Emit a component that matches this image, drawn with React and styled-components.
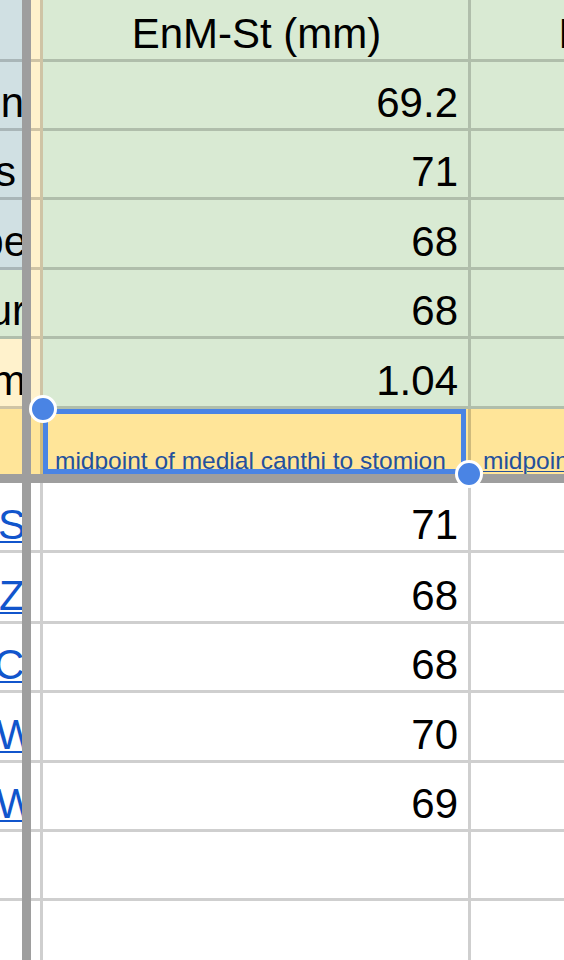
import React from 'react'
import styled, { createGlobalStyle } from 'styled-components'

const GlobalStyle = createGlobalStyle`
  html, body {
    margin: 0;
    padding: 0;
    background: #ffffff;
  }
  body {
    font-family: "Liberation Sans", Arial, sans-serif;
  }
`

const BLUE = '#d0e0e3'
const GREEN = '#d9ead3'
const PALE = '#fff2cc'
const YELLOW = '#ffe599'
const WHITE = '#ffffff'
const GRID = 'rgba(0, 0, 0, 0.19)'
const FROZEN = '#9e9e9e'
const LINK = '#1155cc'
const SELECT = '#4a84e4'

const Sheet = styled.div`
  width: 564px;
  height: 960px;
  overflow: hidden;
  background: #ffffff;
  color: #000000;
`

const Row = styled.div`
  display: flex;
  height: ${props => props.$h}px;
  box-sizing: border-box;
`

const LabelCell = styled.div`
  flex: none;
  width: 22px;
  box-sizing: border-box;
  overflow: hidden;
  display: flex;
  align-items: flex-end;
  justify-content: ${props => props.$link ? 'flex-start' : 'flex-end'};
  background: ${props => props.$bg};
  border-bottom: ${props => props.$line ? `3px solid ${GRID}` : 'none'};
  font-size: 42px;
  line-height: 48px;
  white-space: nowrap;
  padding-bottom: 1px;
`

const LabelText = styled.span`
  flex: none;
  margin-right: ${props => props.$right || 0}px;
  margin-left: ${props => props.$left || 0}px;
`

const LinkText = styled.span`
  flex: none;
  color: ${props => props.$small ? '#24509c' : LINK};
  text-decoration: underline;
  text-decoration-thickness: ${props => props.$small ? 1 : 2}px;
  text-underline-offset: 2px;
`

const FrozenColumn = styled.div`
  flex: none;
  width: 9px;
  background: ${FROZEN};
`

const FrozenRow = styled.div`
  height: 9px;
  background: ${FROZEN};
`

const Stripe = styled.div`
  flex: none;
  width: 12px;
  box-sizing: border-box;
  background: ${props => props.$bg};
  border-right: 3px solid ${GRID};
  border-bottom: ${props => props.$line ? `3px solid ${GRID}` : 'none'};
`

const Cell = styled.div`
  flex: none;
  position: relative;
  width: 428px;
  box-sizing: border-box;
  display: flex;
  align-items: flex-end;
  justify-content: ${props => props.$align === 'center' ? 'center' : props.$align === 'left' ? 'flex-start' : 'flex-end'};
  padding: 0 10px ${props => props.$small ? 0 : 1}px 12px;
  background: ${props => props.$bg};
  border-right: 3px solid ${GRID};
  border-bottom: ${props => props.$line ? `3px solid ${GRID}` : 'none'};
  font-size: ${props => props.$small ? 24.5 : 42}px;
  line-height: ${props => props.$small ? 26 : 48}px;
  white-space: nowrap;
  overflow: ${props => props.$clip ? 'hidden' : 'visible'};
`

const Selection = styled.div`
  position: absolute;
  top: 0;
  left: 0;
  right: 2px;
  bottom: 0;
  border: 5px solid ${SELECT};
  box-sizing: border-box;
  pointer-events: none;
  z-index: 10;
`

const Handle = styled.div`
  position: absolute;
  width: 22px;
  height: 22px;
  border-radius: 50%;
  background: ${SELECT};
  border: 3px solid #ffffff;
  left: ${props => props.$x - 14}px;
  top: ${props => props.$y - 14}px;
  z-index: 11;
`

const summary = [
  { h: 62, label: { bg: BLUE }, value: 'EnM-St (mm)', next: 'EnM-Pr (mm)', align: 'center' },
  { h: 69, label: { bg: BLUE, text: 'n', right: -2 }, value: '69.2' },
  { h: 69, label: { bg: BLUE, text: 's', right: 6 }, value: '71' },
  { h: 70, label: { bg: BLUE, text: 'be', right: -5 }, value: '68' },
  { h: 69, label: { bg: GREEN, text: 'ur', right: -4 }, value: '68' },
  { h: 70, label: { bg: PALE, text: 'm', right: -4 }, value: '1.04' },
]

const records = [
  { h: 70, name: 'Smith', left: -2, value: '71' },
  { h: 71, name: 'Zhao', left: -1, value: '68' },
  { h: 69, name: 'Chen', left: -6, value: '68' },
  { h: 70, name: 'Wang', left: -4, value: '70' },
  { h: 69, name: 'Wu', left: -4, value: '69' },
  { h: 69 },
  { h: 70 },
]

const App = () => {
  return (
    <Sheet>
      <GlobalStyle />
      {summary.map((row, i) => (
        <Row key={i} $h={row.h}>
          <LabelCell $bg={row.label.bg} $line>
            {row.label.text && <LabelText $right={row.label.right}>{row.label.text}</LabelText>}
          </LabelCell>
          <FrozenColumn />
          <Stripe $bg={PALE} $line />
          <Cell $bg={GREEN} $line $align={row.align}>{row.value}</Cell>
          <Cell $bg={GREEN} $line $align={row.align}>{row.next}</Cell>
        </Row>
      ))}

      <Row $h={65}>
        <LabelCell $bg={YELLOW} />
        <FrozenColumn />
        <Stripe $bg={YELLOW} />
        <Cell $bg={YELLOW} $align="left" $small>
          <LinkText $small>midpoint of medial canthi to stomion</LinkText>
          <Selection />
          <Handle $x={0} $y={0} />
          <Handle $x={426} $y={65} />
        </Cell>
        <Cell $bg={YELLOW} $align="left" $small $clip>
          <LinkText $small>midpoint of medial canthi to prosthion</LinkText>
        </Cell>
      </Row>

      <FrozenRow />

      {records.map((row, i) => (
        <Row key={i} $h={row.h}>
          <LabelCell $bg={WHITE} $line $link>
            {row.name && (
              <LabelText $left={row.left}>
                <LinkText>{row.name}</LinkText>
              </LabelText>
            )}
          </LabelCell>
          <FrozenColumn />
          <Stripe $bg={WHITE} $line />
          <Cell $bg={WHITE} $line>{row.value}</Cell>
          <Cell $bg={WHITE} $line />
        </Row>
      ))}
    </Sheet>
  )
}

export default App
